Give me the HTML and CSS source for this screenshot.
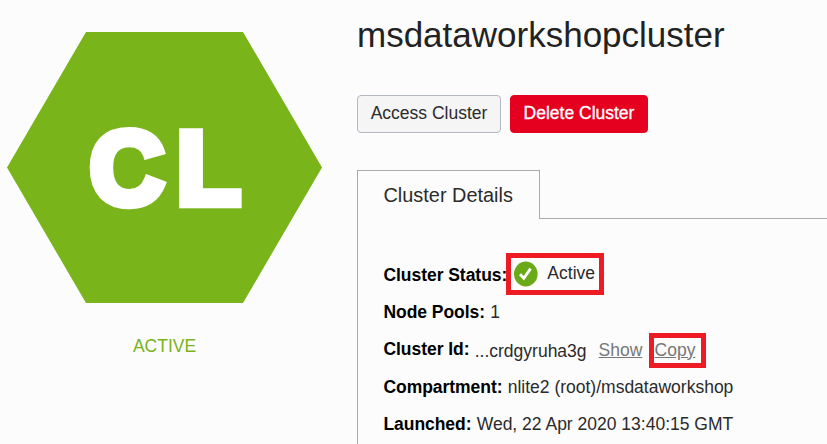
FILE: index.html
```html
<!DOCTYPE html>
<html lang="en">
<head>
<meta charset="utf-8">
<title>msdataworkshopcluster</title>
<link rel="stylesheet" href="styles.css">
</head>
<body>
<div class="page">
  <aside class="badge">
    <svg class="hexagon" width="315" height="271" viewBox="0 0 315 271">
      <path d="M79 0H236L315 135.5L236 271H79L0 135.5Z" fill="#78b41a"/>
      <text class="initials" y="171.8"><tspan x="82.8">C</tspan><tspan x="169.4" textLength="64" lengthAdjust="spacingAndGlyphs">L</tspan></text>
    </svg>
    <div class="state">ACTIVE</div>
  </aside>
  <main class="content">
    <h1 class="title">msdataworkshopcluster</h1>
    <div class="actions">
      <button class="button">Access Cluster</button>
      <button class="button danger">Delete Cluster</button>
    </div>
    <div class="tabs">
      <div class="tab">Cluster Details</div>
      <div class="rule"></div>
    </div>
    <section class="details">
      <div class="row status">
        <b>Cluster Status:</b>
        <span class="active">
          <svg class="check" width="24" height="26" viewBox="0 0 24 26"><ellipse cx="11.8" cy="13" rx="11.8" ry="12.4" fill="#6aaa18"/><path d="M6 13.2L9.8 17.2L16.6 7.6" fill="none" stroke="#fff" stroke-width="2.8"/></svg>
          <span class="value">Active</span>
          <i class="highlight"></i>
        </span>
      </div>
      <div class="row"><b>Node Pools:</b><span class="value">1</span></div>
      <div class="row id">
        <b>Cluster Id:</b><span class="value ocid">...crdgyruha3g</span>
        <a class="link">Show</a>
        <span class="copy"><a class="link">Copy</a><i class="highlight"></i></span>
      </div>
      <div class="row"><b>Compartment:</b><span class="value">nlite2 (root)/msdataworkshop</span></div>
      <div class="row"><b>Launched:</b><span class="value">Wed, 22 Apr 2020 13:40:15 GMT</span></div>
    </section>
  </main>
</div>
</body>
</html>
```
FILE: styles.css
```css
* { box-sizing: border-box; }
body {
  margin: 0;
  background: #fcfcfc;
  color: #2b2b2b;
  font: 17.5px/20px "Liberation Sans", Arial, sans-serif;
  overflow: hidden;
}
.page { display: flex; height: 444px; overflow: hidden; }
.badge { flex: none; width: 357px; padding: 32px 0 0 7px; }
.hexagon { display: block; }
.initials {
  font-size: 103px;
  font-weight: bold;
  fill: #fff;
  stroke: #fff;
  stroke-width: 8.5px;
}
.state { width: 315px; margin-top: 33px; text-align: center; color: #78b41a; }
.content { flex: 1; min-width: 0; }
.title { margin: 15px 0 0; font-size: 35px; line-height: 40px; font-weight: normal; color: #222; }
.actions { display: flex; gap: 9px; margin-top: 40px; }
.button {
  width: 144px;
  height: 38px;
  padding: 0 0 2px;
  border: 1px solid #b4b8c2;
  border-radius: 4px;
  background: #f5f5f5;
  color: #2b2b2b;
  font: inherit;
  white-space: nowrap;
}
.button.danger {
  width: 138px;
  border-color: #e6001f;
  background: #e6001f;
  color: #fff;
  -webkit-text-stroke: 0.3px #fff;
}
.tabs { display: flex; margin-top: 37px; height: 49px; }
.tab {
  width: 183px;
  padding: 14px 0 0 25.5px;
  border: 1px solid #aaa;
  border-bottom: 0;
  font-size: 19.9px;
  white-space: nowrap;
}
.rule { flex: 1; border-bottom: 1px solid #aaa; }
.details { border-left: 1px solid #aaa; height: 225px; padding: 46px 0 0 25.4px; }
.row { display: flex; height: 37.3px; white-space: nowrap; }
.row b { color: #000; margin-right: 5.2px; letter-spacing: -0.04px; }
.status b { width: 125.4px; }
.active { position: relative; display: flex; }
.check { margin: -4px 9.4px 0 0; }
.active .value { margin-top: -2px; }
.highlight { position: absolute; border: 5px solid #ed1c24; }
.active .highlight { left: -8px; top: -12px; width: 98px; height: 42px; }
.id b { margin-top: -1px; }
.ocid { margin: 1px 12px 0 0; }
.link { color: #777; text-decoration: underline; }
.copy { position: relative; display: flex; margin-left: 12.2px; }
.copy .highlight { left: -6px; top: -7px; width: 57px; height: 35px; }
```
